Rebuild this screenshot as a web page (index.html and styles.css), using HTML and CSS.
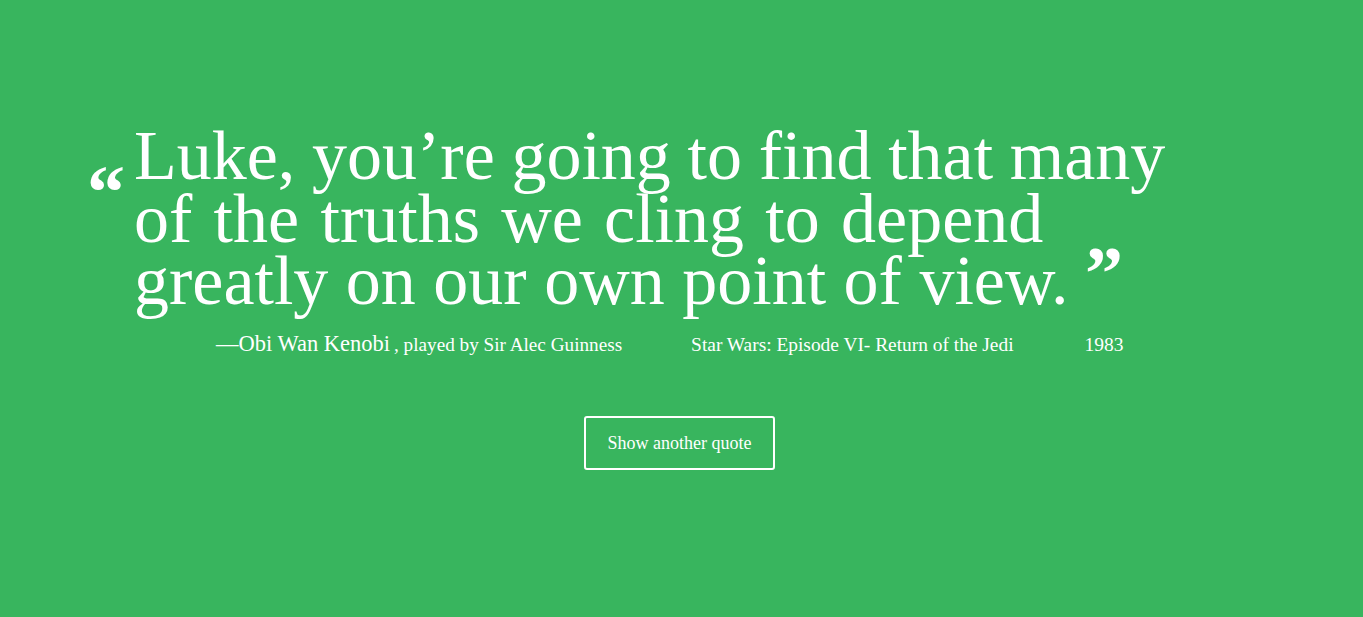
FILE: index.html
```html
<!DOCTYPE html>
<html lang="en">
<head>
<meta charset="utf-8">
<title>Random Quote</title>
<link rel="stylesheet" href="styles.css">
</head>
<body>
<main class="wrap">
  <blockquote class="quote">
    <span class="open-quote">“</span>
    <p class="quote-text"><span class="line line-1">Luke, you’re going to find that many</span> <span class="line line-2">of the truths we cling to depend</span> <span class="line">greatly on our own point of view. <span class="close-quote">”</span></span></p>
  </blockquote>
  <div class="attribution">
    <span class="who"><span class="name">—Obi Wan Kenobi</span> <span class="played">, played by Sir Alec Guinness</span></span>
    <span class="source">Star Wars: Episode VI- Return of the Jedi</span>
    <span class="year">1983</span>
  </div>
  <div class="actions">
    <button class="btn" type="button">Show another quote</button>
  </div>
</main>
</body>
</html>
```

FILE: styles.css
```css
html, body {
  margin: 0;
  padding: 0;
}
body {
  background: #38b55e;
  color: #ffffff;
  font-family: "Liberation Serif", "Times New Roman", serif;
  min-height: 100vh;
}
.wrap {
  width: 1183px;
  margin: 0 auto;
  padding-top: 125px;
}
.quote {
  display: flex;
  align-items: flex-start;
  margin: 0;
}
.open-quote {
  display: block;
  width: 47px;
  margin-left: -3px;
  flex: none;
  font-size: 76px;
  font-weight: bold;
  line-height: 76px;
  margin-top: 29px;
}
.quote-text {
  margin: 0;
  font-size: 70px;
  line-height: 62.5px;
}
.line {
  display: block;
  height: 62.5px;
  white-space: nowrap;
}
.line-1 {
  word-spacing: -0.8px;
}
.line-2 {
  word-spacing: 3.8px;
}
.close-quote {
  font-size: 76px;
  font-weight: bold;
  line-height: 0;
  vertical-align: 5px;
  margin-left: -1px;
}
.attribution {
  display: flex;
  align-items: baseline;
  gap: 69px;
  margin: 16px 0 0 126px;
  line-height: 30px;
}
.name {
  font-size: 22.5px;
}
.played {
  font-size: 19.2px;
}
.source {
  font-size: 19.4px;
}
.year {
  font-size: 19.5px;
  margin-left: 2px;
}
.actions {
  display: flex;
  justify-content: center;
  padding-right: 4px;
  margin-top: 55px;
}
.btn {
  background: transparent;
  color: #ffffff;
  border: 2px solid #ffffff;
  border-radius: 3px;
  font-family: "Liberation Serif", "Times New Roman", serif;
  font-size: 18px;
  width: 191px;
  height: 54px;
  padding: 2px 0 0;
  cursor: pointer;
}
```
